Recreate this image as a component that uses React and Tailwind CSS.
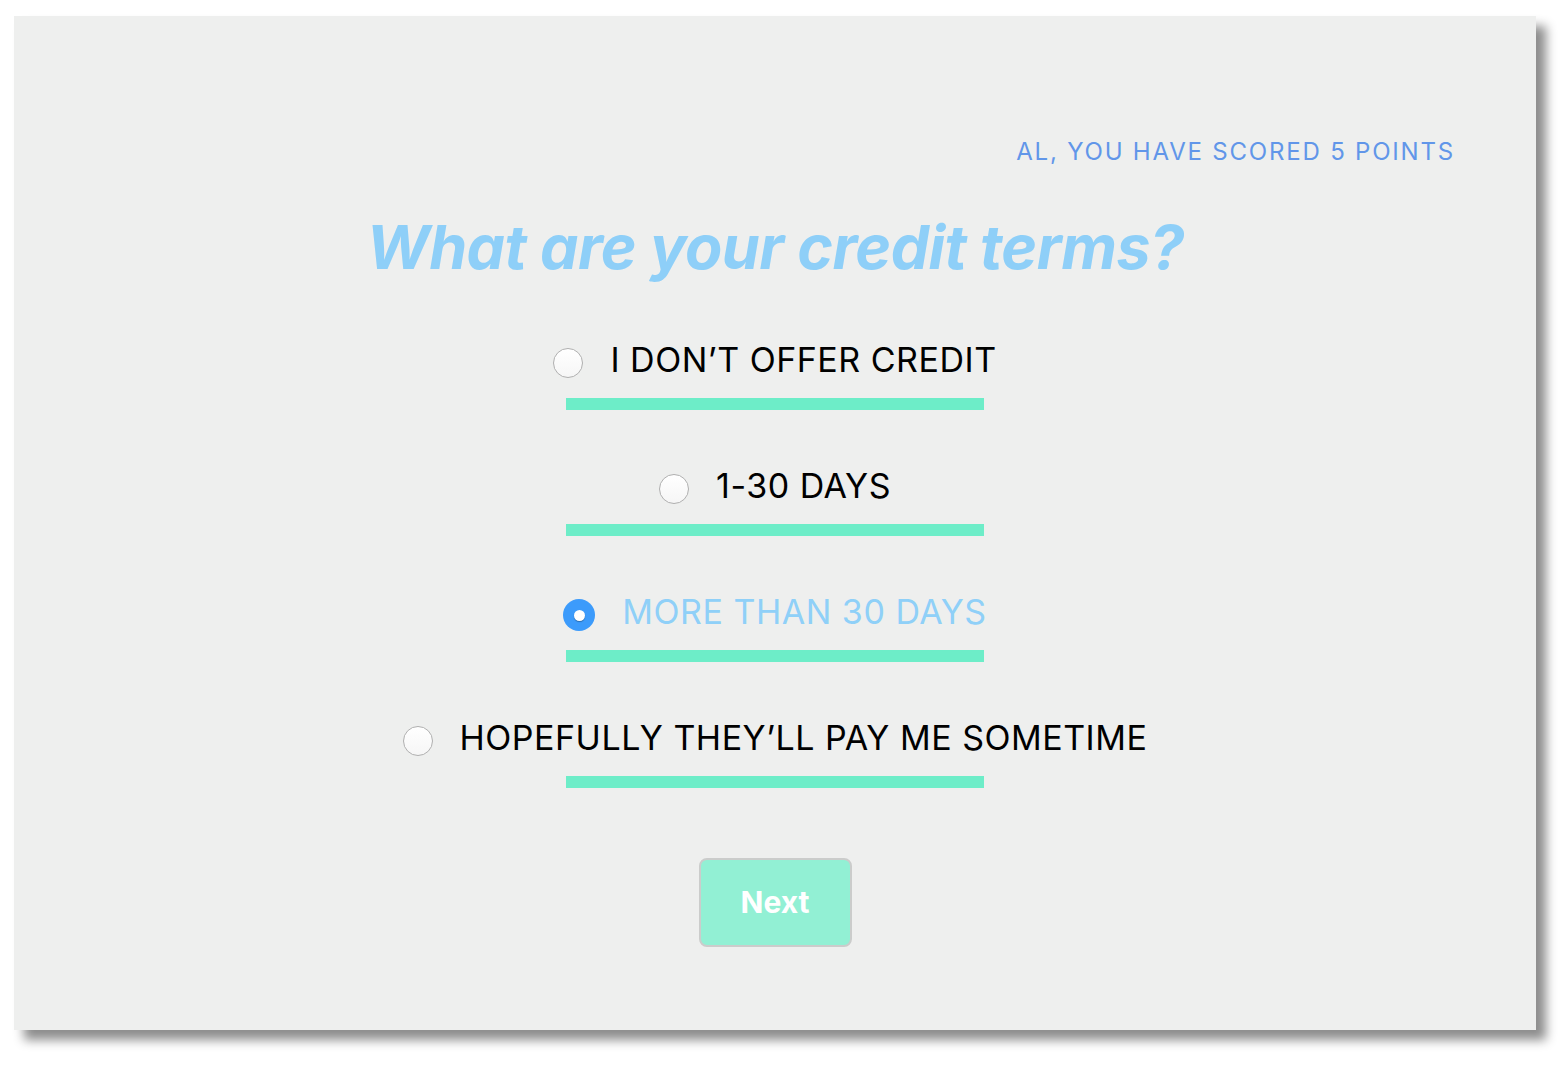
import { useState } from "react";

const options = [
  "I DON\u2019T OFFER CREDIT",
  "1-30 DAYS",
  "MORE THAN 30 DAYS",
  "HOPEFULLY THEY\u2019LL PAY ME SOMETIME",
];

export default function App() {
  const [picked, setPicked] = useState(2);

  return (
    <div className="min-h-screen bg-white pt-[16px] pl-[14px] font-['Inter',sans-serif]">
      <div className="w-[1522px] h-[1014px] bg-[#eeefee] shadow-[10px_10px_10px_rgba(0,0,0,0.45)] flex flex-col items-center">
        {/* score */}
        <div className="self-stretch text-right pr-[81px] pt-[120px] text-[24px] leading-[32px] tracking-[0.075em] text-[#6196e9]">
          AL, YOU HAVE SCORED 5 POINTS
        </div>

        {/* question */}
        <h1 className="mt-[39px] text-[61px] leading-[80px] font-bold italic tracking-[-0.01em] text-[#8ecff8]">
          What are your credit terms?
        </h1>

        {/* answers */}
        <div className="mt-[49px] flex flex-col items-center">
          {options.map((label, i) => (
            <Option
              key={label}
              label={label}
              selected={picked === i}
              onPick={() => setPicked(i)}
            />
          ))}
        </div>

        <button className="mt-[18px] w-[153px] h-[89px] rounded-[8px] border-2 border-[#cbcccb] bg-[#92f0d4] text-white text-[30px] font-bold">
          Next
        </button>
      </div>
    </div>
  );
}

function Option({ label, selected, onPick }) {
  return (
    <div className="flex flex-col items-center h-[126px]">
      <label
        onClick={onPick}
        className="h-[48px] flex items-center gap-[27px] cursor-pointer"
      >
        {selected ? (
          <span className="w-[32px] h-[32px] rounded-full bg-[#3c9bfb] flex items-center justify-center mt-[6px]">
            <span className="w-[11px] h-[11px] rounded-full bg-white shadow-[0_1px_1px_rgba(0,0,0,0.3)]" />
          </span>
        ) : (
          <span className="w-[30px] h-[30px] rounded-full bg-gradient-to-b from-white to-[#f6f6f6] border border-[#b0b0b0] mt-[6px]" />
        )}
        <span
          className={`text-[34px] leading-[40px] tracking-[0.015em] ${
            selected ? "text-[#8fd0f8]" : "text-black"
          }`}
        >
          {label}
        </span>
      </label>
      <div className="mt-[14px] w-[418px] h-[12px] bg-[#6dedc8]" />
    </div>
  );
}
